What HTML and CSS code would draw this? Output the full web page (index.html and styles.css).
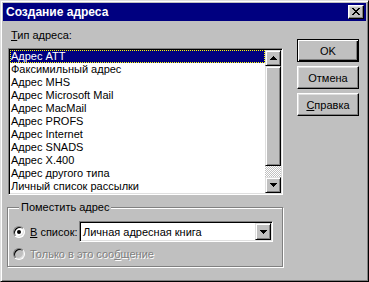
FILE: index.html
```html
<!DOCTYPE html>
<html lang="ru">
<head>
    <meta charset="UTF-8">
    <title>Создание адреса</title>
    <link rel="stylesheet" href="styles.css">
</head>
<body>
    <div class="window">
        <div class="titlebar">
            <span class="title">Создание адреса</span>
            <button class="btn close">
                <svg width="8" height="7" viewBox="0 0 8 7" shape-rendering="crispEdges"><path d="M0 0h2v1h-2zM6 0h2v1h-2zM1 1h2v1h-2zM5 1h2v1h-2zM2 2h4v1h-4zM3 3h2v1h-2zM2 4h4v1h-4zM1 5h2v1h-2zM5 5h2v1h-2zM0 6h2v1h-2zM6 6h2v1h-2z" fill="#000"/></svg>
            </button>
        </div>

        <div class="client">
            <div class="main">
                <div class="label"><u>Т</u>ип адреса:</div>

                <div class="listbox">
                    <ul class="items">
                        <li class="selected">Адрес ATT</li>
                        <li>Факсимильный адрес</li>
                        <li>Адрес MHS</li>
                        <li>Адрес Microsoft Mail</li>
                        <li>Адрес MacMail</li>
                        <li>Адрес PROFS</li>
                        <li>Адрес Internet</li>
                        <li>Адрес SNADS</li>
                        <li>Адрес X.400</li>
                        <li>Адрес другого типа</li>
                        <li>Личный список рассылки</li>
                    </ul>
                    <div class="scrollbar">
                        <div class="sb-btn">
                            <svg width="7" height="4" viewBox="0 0 7 4" shape-rendering="crispEdges"><path d="M3 0h1v1h-1zM2 1h3v1h-3zM1 2h5v1h-5zM0 3h7v1h-7z" fill="#000"/></svg>
                        </div>
                        <div class="sb-track">
                            <div class="sb-thumb"></div>
                        </div>
                        <div class="sb-btn">
                            <svg width="7" height="4" viewBox="0 0 7 4" shape-rendering="crispEdges"><path d="M0 0h7v1h-7zM1 1h5v1h-5zM2 2h3v1h-3zM3 3h1v1h-1z" fill="#000"/></svg>
                        </div>
                    </div>
                </div>

                <div class="group">
                    <div class="legend">Поместить адрес</div>
                    <div class="option">
                        <span class="radio checked"></span>
                        <span class="opt-label"><u>В</u> список:</span>
                        <div class="combo">
                            <span class="combo-text">Личная адресная книга</span>
                            <span class="combo-btn">
                                <svg width="7" height="4" viewBox="0 0 7 4" shape-rendering="crispEdges"><path d="M0 0h7v1h-7zM1 1h5v1h-5zM2 2h3v1h-3zM3 3h1v1h-1z" fill="#000"/></svg>
                            </span>
                        </div>
                    </div>
                    <div class="option disabled">
                        <span class="radio"></span>
                        <span class="opt-label">Только в это соо<u>б</u>щение</span>
                    </div>
                </div>
            </div>

            <div class="actions">
                <button class="btn default">OK</button>
                <button class="btn">Отмена</button>
                <button class="btn"><u>С</u>правка</button>
            </div>
        </div>
    </div>
</body>
</html>
```

FILE: styles.css
```css
body {
    margin: 0;
    padding: 0;
    font-family: "Liberation Sans", Arial, sans-serif;
    font-size: 11px;
    color: #000;
    background: #c0c0c0;
}
u {
    text-decoration: underline;
    text-underline-offset: 1px;
}
.window {
    width: 369px;
    height: 282px;
    box-sizing: border-box;
    background: #c0c0c0;
    border: 1px solid;
    border-color: #dfdfdf #000 #000 #dfdfdf;
    box-shadow: inset 1px 1px #fff, inset -1px -1px #808080;
    padding: 2px;
    display: flex;
    flex-direction: column;
}
.titlebar {
    height: 18px;
    background: #000080;
    display: flex;
    align-items: center;
    justify-content: space-between;
    padding: 0 2px 0 3px;
}
.title {
    color: #fff;
    font-weight: bold;
    font-size: 12px;
    line-height: 18px;
}
.btn {
    font-family: "Liberation Sans", Arial, sans-serif;
    font-size: 11px;
    color: #000;
    background: #c0c0c0;
    border: 1px solid;
    border-color: #fff #000 #000 #fff;
    box-shadow: inset -1px -1px #808080, inset 1px 1px #dfdfdf;
    padding: 0;
    margin: 0;
    box-sizing: border-box;
}
.close {
    width: 16px;
    height: 14px;
    display: flex;
    align-items: center;
    justify-content: center;
    padding: 0 1px 1px 0;
}
.client {
    flex: 1;
    display: flex;
    padding: 8px 0 0 4px;
}
.main {
    width: 277px;
}
.label {
    line-height: 13px;
    padding-left: 4px;
}
.listbox {
    margin: 6px 0 0 1px;
    width: 275px;
    height: 147px;
    box-sizing: border-box;
    border: 1px solid;
    border-color: #808080 #fff #fff #808080;
    box-shadow: inset 1px 1px #000, inset -1px -1px #dfdfdf;
    padding: 1px;
    background: #fff;
    display: flex;
}
.items {
    list-style: none;
    margin: 0;
    padding: 0;
    flex: 1;
    background: #fff;
}
.items li {
    height: 13px;
    line-height: 13px;
    padding-left: 1px;
    white-space: nowrap;
}
.items li.selected {
    background: #000080;
    color: #fff;
    outline: 1px dotted #ffff00;
    outline-offset: -1px;
}
.scrollbar {
    width: 16px;
    display: flex;
    flex-direction: column;
}
.sb-btn, .sb-thumb, .combo-btn {
    background: #c0c0c0;
    box-sizing: border-box;
    border: 1px solid;
    border-color: #dfdfdf #000 #000 #dfdfdf;
    box-shadow: inset 1px 1px #fff, inset -1px -1px #808080;
}
.sb-btn {
    height: 16px;
    display: flex;
    align-items: center;
    justify-content: center;
}
.sb-track {
    flex: 1;
    display: flex;
    flex-direction: column;
    background-color: #c0c0c0;
    background-image: conic-gradient(#fff 25%, #c0c0c0 0 50%, #fff 0 75%, #c0c0c0 0);
    background-size: 2px 2px;
}
.sb-thumb {
    height: 100px;
}
.group {
    margin-top: 12px;
    width: 276px;
    height: 60px;
    box-sizing: border-box;
    border: 1px solid #808080;
    box-shadow: 1px 1px 0 #fff, inset 1px 1px 0 #fff;
    padding: 0 9px 0 5px;
}
.legend {
    margin: -7px 0 0 6px;
    width: fit-content;
    padding: 0 2px;
    line-height: 13px;
    background: #c0c0c0;
}
.option {
    display: flex;
    align-items: center;
    height: 21px;
}
.option:first-of-type {
    margin-top: 7px;
}
.legend + .option {
    margin-top: 7px;
}
.option + .option {
    margin-top: 1px;
}
.radio {
    width: 12px;
    height: 12px;
    box-sizing: border-box;
    border-radius: 50%;
    border: 1px solid;
    border-color: #808080 #fff #fff #808080;
    box-shadow: inset 1px 1px #000, inset -1px -1px #dfdfdf;
    background: #fff;
    display: flex;
    align-items: center;
    justify-content: center;
    margin-right: 5px;
}
.radio.checked::after {
    content: "";
    width: 4px;
    height: 4px;
    border-radius: 50%;
    background: #000;
}
.disabled .radio {
    background: #c0c0c0;
}
.disabled .opt-label {
    color: #808080;
    text-shadow: 1px 1px #fff;
}
.combo {
    margin-left: auto;
    width: 194px;
    height: 21px;
    box-sizing: border-box;
    border: 1px solid;
    border-color: #808080 #fff #fff #808080;
    box-shadow: inset 1px 1px #000, inset -1px -1px #dfdfdf;
    background: #fff;
    padding: 2px 1px 1px 3px;
    display: flex;
    align-items: center;
}
.combo-text {
    flex: 1;
}
.combo-btn {
    width: 16px;
    height: 17px;
    display: flex;
    align-items: center;
    justify-content: center;
    margin-top: -1px;
}
.actions {
    margin: 10px 0 0 13px;
    display: flex;
    flex-direction: column;
    gap: 4px;
}
.actions .btn {
    width: 62px;
    height: 23px;
}
.actions .btn.default {
    border: 1px solid #000;
    box-shadow: inset 1px 1px #fff, inset -1px -1px #000, inset -2px -2px #808080;
}
```
